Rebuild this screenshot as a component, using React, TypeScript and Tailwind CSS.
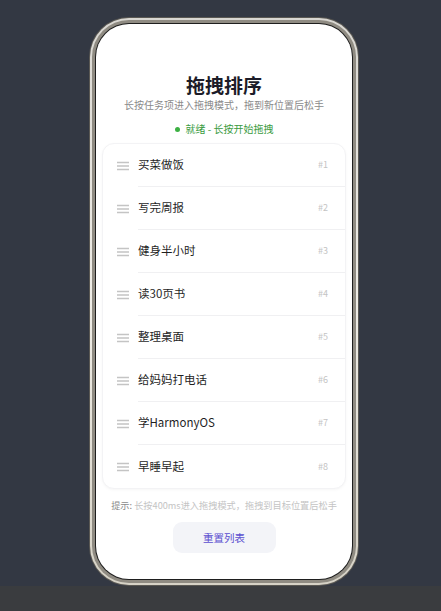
import React from 'react';

const tasks = ['买菜做饭', '写完周报', '健身半小时', '读30页书', '整理桌面', '给妈妈打电话', '学HarmonyOS', '早睡早起'];

const font = { fontFamily: '"Noto Sans CJK SC", "Noto Sans", sans-serif' };

function Handle() {
  return (
    <svg width="12" height="10" viewBox="0 0 12 10" className="shrink-0">
      <path d="M0 1.5h12M0 5h12M0 8.5h12" stroke="#c4c4c4" strokeWidth="1.3" />
    </svg>
  );
}

export default function App() {
  return (
    <div className="w-[441px] h-[611px] flex flex-col bg-[#333843]" style={font}>
      <div className="h-[586px] pl-[89px] pt-[17px]">
        {/* phone frame */}
        <div className="w-[270px] h-[569px] rounded-[40px] p-[1px] bg-[#5a5853]">
          <div className="h-full rounded-[39px] p-[2px] bg-[linear-gradient(180deg,#d9d7d2,#efede7_50%,#d6d2c6)]">
            <div className="h-full rounded-[37px] p-[3px] bg-[#8f8b82]">
              <div className="h-full rounded-[34px] p-[1px] bg-[#1e1e1e]">
                <div className="h-full rounded-[33px] bg-white flex flex-col items-center pt-[48px] px-[6px]">
                  <h1 className="text-[19px] leading-[26px] font-bold text-[#1c1c28]">拖拽排序</h1>
                  <p className="text-[10px] leading-[14px] text-[#8a8a8a]">长按任务项进入拖拽模式，拖到新位置后松手</p>
                  <div className="mt-[10px] flex items-center gap-[6px] text-[10px] leading-[14px] text-[#3a9b3e]">
                    <span className="w-[5px] h-[5px] rounded-full bg-[#3cb043]" />
                    <span>就绪 - 长按开始拖拽</span>
                  </div>

                  {/* list */}
                  <div className="mt-[7px] w-full rounded-[12px] border border-[#f3f3f5] shadow-[0_1px_3px_rgba(0,0,0,0.04)] bg-white overflow-hidden">
                    {tasks.map((t, i) => (
                      <div key={t} className="h-[43px] flex items-center pl-[14px]">
                        <Handle />
                        <div
                          className={`ml-[9px] flex-1 h-full flex items-center justify-between pr-[17px] ${
                            i < tasks.length - 1 ? 'border-b border-[#f0f0f2]' : ''
                          }`}
                        >
                          <span className="text-[11.5px] text-[#1f1f1f]">{t}</span>
                          <span className="text-[9px] text-[#c4c4c4]">#{i + 1}</span>
                        </div>
                      </div>
                    ))}
                  </div>

                  <p className="mt-[9px] text-[9.2px] leading-[14px] text-[#c4c4c4] whitespace-nowrap">
                    <span className="text-[#8a8a8a]">提示:</span> 长按400ms进入拖拽模式，拖拽到目标位置后松手
                  </p>

                  <button className="mt-[10px] w-[103px] h-[31px] rounded-[9px] bg-[#f3f4f8] text-[10.5px] text-[#5b4fd0]">
                    重置列表
                  </button>
                </div>
              </div>
            </div>
          </div>
        </div>
      </div>
      <div className="h-[25px] bg-[#3a3c3f]" />
    </div>
  );
}
